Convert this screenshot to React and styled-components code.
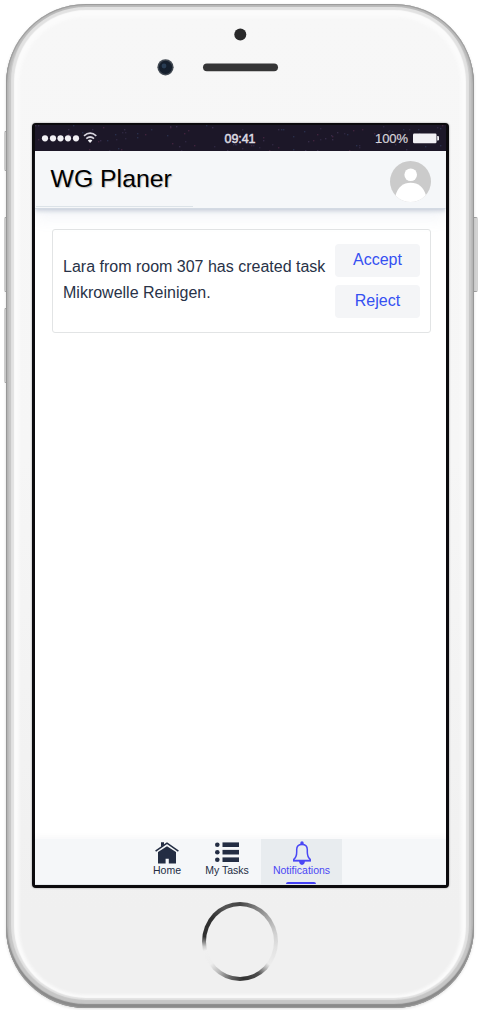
import React from 'react';
import styled, { createGlobalStyle } from 'styled-components';

const GlobalStyle = createGlobalStyle`
  * { box-sizing: border-box; }
  html, body { margin: 0; background: #fff; }
  body { font-family: "Liberation Sans", Arial, sans-serif; }
  button { font-family: inherit; }
`;

const Page = styled.main`
  position: relative;
  width: 480px;
  height: 1010px;
  padding: 4px 6px 2px;
  overflow: hidden;
`;

const SideKey = styled.span`
  position: absolute;
  ${({ $side }) => $side}: ${({ $side }) => ($side === 'left' ? 4 : 2)}px;
  top: ${({ $top }) => $top}px;
  width: 6px;
  height: ${({ $height }) => $height}px;
  border-radius: 2px;
  border: 1px solid #a3a3a3;
  border-${({ $side }) => $side}-color: #d2d2d2;
  background: #d4d4d4;
`;

const Phone = styled.div`
  position: relative;
  display: flex;
  flex-direction: column;
  align-items: center;
  width: 468px;
  height: 1004px;
  border-radius: 80px;
  background: linear-gradient(#f7f7f7 0%, #f6f6f6 45%, #f0f0f0 90%, #f0f0f0 100%);
  box-shadow:
    inset 0 0 1px 1px #9a9a9a,
    inset 0 -3px 1px 1px #8a8a8a,
    inset 0 0 0 3px #bcbcbc,
    inset 0 -3px 1px 5px #c6c6c6,
    inset 0 -2px 1px 8px #e2e2e2,
    inset 0 0 3px 13px #fbfbfb,
    0 1px 3px rgba(0, 0, 0, 0.14);
`;

const Forehead = styled.header`
  height: 119px;
  width: 100%;
`;

const Hardware = styled.svg`
  display: block;
`;

const Screen = styled.section`
  display: flex;
  flex-direction: column;
  width: 417px;
  height: 765px;
  border: 3px solid #0b0a0d;
  border-top-width: 2px;
  border-radius: 4px;
  background: #fff;
  box-shadow: 0 0 2px #8b8b8b;
`;

const StatusBar = styled.div`
  display: flex;
  flex: none;
  height: 26px;
  color: #e8e6ec;
  background: #1c1728;
`;

const StatusArt = styled.svg`
  display: block;
`;

const AppHeader = styled.header`
  display: flex;
  flex: none;
  justify-content: space-between;
  height: 58px;
  padding: 10px 15px 0 16px;
  background: #f5f7f9;
  border-bottom: 1px solid #d3dae3;
  box-shadow: 0 2px 4px rgba(130, 145, 170, 0.38), 0 8px 16px rgba(150, 165, 195, 0.12);
  clip-path: inset(0 0 -30px 0);
`;

const TitleArea = styled.div`
  position: relative;
`;

const HeaderRule = styled.i`
  position: absolute;
  left: -15px;
  top: 45px;
  width: 157px;
  height: 1px;
  background: #dce3e8;
`;

const Title = styled.h1`
  margin: 3px 0 0;
  color: #000;
  font-size: 24.8px;
  font-weight: 400;
  line-height: 29px;
  text-shadow: 1px 1px 1px #bbb;
`;

const Content = styled.div`
  flex: 1;
  padding: 20px 15px 0 17px;
`;

const Card = styled.article`
  display: flex;
  align-items: center;
  gap: 8px;
  height: 104px;
  padding: 0 10px;
  border: 1px solid #e2e4e5;
  border-radius: 3px;
  background: #fff;
`;

const Message = styled.p`
  flex: 1;
  margin: 0 -1px 2px 0.5px;
  color: #283247;
  font-size: 16px;
  line-height: 26px;
  white-space: pre-line;
`;

const Actions = styled.div`
  display: flex;
  flex-direction: column;
  gap: 8px;
`;

const ActionButton = styled.button`
  width: 85px;
  height: 33px;
  padding: 0 0 1px 1px;
  border: 0;
  border-radius: 4px;
  background: #f4f5f7;
  color: #3550f2;
  font-size: 16px;
`;

const NavBar = styled.nav`
  display: flex;
  flex: none;
  justify-content: center;
  height: 46px;
  padding-left: 4px;
  padding-right: 1px;
  background: #f5f7f9;
  box-shadow: 0 -2px 6px rgba(100, 100, 110, 0.05);
  border-bottom: 1px solid #e3e8eb;
`;

const NavItem = styled.a`
  position: relative;
  display: flex;
  flex-direction: column;
  align-items: center;
  width: ${({ $width }) => $width}px;
  padding-top: 2px;
  color: ${({ $active }) => ($active ? '#4a47f5' : '#232d43')};
  background: ${({ $active }) => ($active ? '#e8ecef' : 'transparent')};
`;

const NavLabel = styled.span`
  margin-top: -1px;
  font-size: 10.5px;
  line-height: 13px;
  white-space: nowrap;
`;

const ActiveMark = styled.i`
  position: absolute;
  left: 25px;
  bottom: 0;
  width: 30px;
  height: 2px;
  border-radius: 2px 2px 0 0;
  background: #4340f3;
`;

const HomeButton = styled.div`
  width: 76px;
  height: 79px;
  margin-top: 14px;
  padding: 4px;
  border-radius: 50%;
  filter: blur(0.5px);
  background: conic-gradient(
    #444 0deg, #777 22deg, #a5a5a5 48deg, #cfcfcf 75deg, #e2e2e2 100deg,
    #ececec 128deg, #aaa 138deg, #505050 150deg, #303030 175deg,
    #666 195deg, #bbb 215deg, #eee 232deg, #f0f0f0 255deg, #ccc 262deg,
    #303030 278deg, #303030 310deg, #555 335deg, #444 360deg
  );
`;

const HomeSurface = styled.div`
  height: 100%;
  border-radius: 50%;
  background: #f0f0f0;
`;

const specks = Array.from({ length: 110 }, (_, i) => ({
  x: (i * 83 + (i * i * 7)) % 411,
  y: (i * 17 + i * i * 11 + (i % 7) * 5) % 26,
  color: ['#352c47', '#2d263f', '#40233d', '#292f4a'][i % 4],
}));

function StatusIcons() {
  return (
    <StatusArt width="411" height="26" viewBox="35 125 411 26">
      {specks.map((s, i) => (
        <rect key={i} x={35 + s.x} y={125 + s.y} width="1.4" height="1.4" fill={s.color} />
      ))}
      <g fill="#f1f0f4">
        {[45, 53, 60.5, 68, 76].map((x) => <circle key={x} cx={x} cy="138.3" r="3.1" />)}
        <rect x="413" y="133.5" width="23.5" height="9.8" rx="1.2" />
        <path d="M437.2 136h.8q1 0 1 1.2v2q0 1.2-1 1.2h-.8z" />
      </g>
      <g fill="none" stroke="#d7d5de" strokeWidth="1.7">
        <path d="M84 135.8Q90.1 130.6 96.3 135.8" />
        <path d="M86.3 138.6Q90.1 135.4 94 138.6" />
      </g>
      <path d="M87.8 140.4Q90.1 138.6 92.4 140.4L90.1 143z" fill="#f1f0f4" />
      <text x="224.5" y="142.8" textLength="31" fontSize="12.5" fill="#dddbe2" stroke="#dddbe2" strokeWidth=".5" fontFamily="Liberation Sans, sans-serif">09:41</text>
      <text x="375" y="143" textLength="33" fontSize="13" fill="#d5d3da" stroke="#d5d3da" strokeWidth=".2" fontFamily="Liberation Sans, sans-serif">100%</text>
    </StatusArt>
  );
}

function Avatar() {
  return (
    <svg width="41" height="41" viewBox="0 0 41 41">
      <defs><clipPath id="avatarClip"><circle cx="20.5" cy="20.5" r="20.5" /></clipPath></defs>
      <g clipPath="url(#avatarClip)">
        <rect width="41" height="41" fill="#cbcbcb" />
        <circle cx="20.7" cy="13.8" r="6.3" fill="#fff" />
        <path d="M5.3 35C8 26 13 21.8 20.7 21.8S33.4 26 36.2 35V41H5.3z" fill="#fff" />
      </g>
    </svg>
  );
}

function HomeIcon() {
  return (
    <svg width="24" height="24" viewBox="0 0 24 24">
      <path d="M.6 10.2 12 2.2l11.4 8" fill="none" stroke="currentColor" strokeWidth="1.6" />
      <path d="M6 6V1.2h3v2.6zM3 11 12 5.2l9 5.8v11.4h-7.2v-4.6h-3.2v4.6H3z" fill="currentColor" />
    </svg>
  );
}

function ListIcon() {
  return (
    <svg width="24" height="24" viewBox="0 0 24 24" fill="currentColor">
      {[3.7, 11.2, 18.7].map((y) => (
        <g key={y}><circle cx="2.3" cy={y} r="2.3" /><rect x="7.5" y={y - 2.3} width="16.5" height="4.6" /></g>
      ))}
    </svg>
  );
}

function BellIcon() {
  return (
    <svg width="24" height="24" viewBox="0 0 24 24">
      <path d="M3.8 19.5v-1.2C6.2 16.4 6.7 14.4 6.7 11V8.5Q6.7 3.4 12 3.4t5.3 5.1V11c0 3.4.6 5.4 2.9 7.3v1.2z" fill="none" stroke="currentColor" strokeWidth="1.5" />
      <path d="M10.3 3.5V1.9a1.7 1.7 0 0 1 3.4 0v1.6zM3 18.9h18v1.7h-6.1Q14.5 23.9 12 23.9t-2.9-3.3H3z" fill="currentColor" />
    </svg>
  );
}

function NavigationLink({ label, width, active, children }) {
  return (
    <NavItem $width={width} $active={active}>
      {children}
      <NavLabel>{label}</NavLabel>
      {active && <ActiveMark />}
    </NavItem>
  );
}

export default function App() {
  return (
    <>
      <GlobalStyle />
      <Page>
        <SideKey $side="left" $top={131} $height={40} />
        <SideKey $side="left" $top={217} $height={75} />
        <SideKey $side="left" $top={308} $height={75} />
        <SideKey $side="right" $top={217} $height={75} />
        <Phone>
          <Forehead>
            <Hardware width="468" height="119" viewBox="6 4 468 119">
              <circle cx="240.3" cy="34.5" r="6" fill="#29292a" />
              <circle cx="165.5" cy="67.3" r="8.1" fill="#424952" />
              <circle cx="165.5" cy="67.3" r="6.6" fill="#151f2d" />
              <circle cx="164" cy="66" r="2.4" fill="#293d54" />
              <rect x="203" y="63.4" width="75" height="7.8" rx="3.9" fill="#353536" />
            </Hardware>
          </Forehead>
          <Screen>
            <StatusBar><StatusIcons /></StatusBar>
            <AppHeader>
              <TitleArea><Title>WG Planer</Title><HeaderRule /></TitleArea>
              <Avatar />
            </AppHeader>
            <Content>
              <Card>
                <Message>{'Lara from room 307 has created task\nMikrowelle Reinigen.'}</Message>
                <Actions>
                  <ActionButton>Accept</ActionButton>
                  <ActionButton>Reject</ActionButton>
                </Actions>
              </Card>
            </Content>
            <NavBar>
              <NavigationLink label="Home" width={52}><HomeIcon /></NavigationLink>
              <NavigationLink label="My Tasks" width={68}><ListIcon /></NavigationLink>
              <NavigationLink label="Notifications" width={81} active><BellIcon /></NavigationLink>
            </NavBar>
          </Screen>
          <HomeButton><HomeSurface /></HomeButton>
        </Phone>
      </Page>
    </>
  );
}
